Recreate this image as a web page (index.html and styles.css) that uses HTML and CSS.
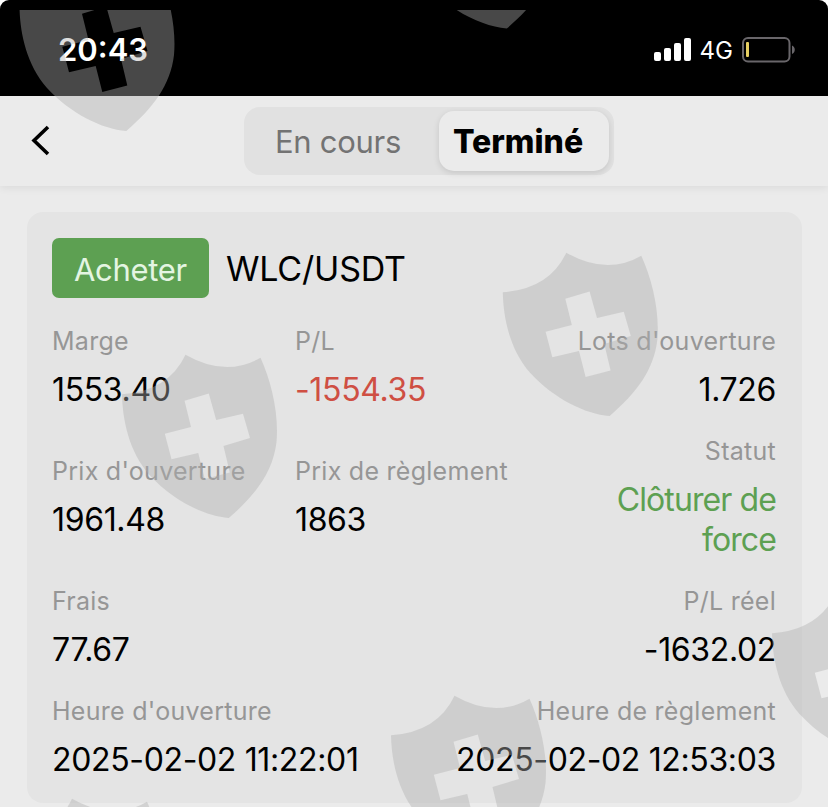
FILE: index.html
```html
<!DOCTYPE html>
<html lang="fr">
<head>
    <meta charset="UTF-8">
    <meta name="viewport" content="width=device-width, initial-scale=1.0">
    <title>WLC/USDT</title>
    <link rel="stylesheet" href="styles.css">
</head>
<body>
    <div class="screen">
        <div class="status-bar">
            <span class="time">20:43</span>
            <div class="status-icons">
                <svg class="signal" width="38" height="24" viewBox="0 0 38 24" fill="#fff">
                    <rect x="0" y="14" width="7" height="9" rx="2"/>
                    <rect x="10" y="10" width="7" height="13" rx="2"/>
                    <rect x="20" y="5" width="7" height="18" rx="2"/>
                    <rect x="30" y="0" width="7" height="23" rx="2"/>
                </svg>
                <span class="network">4G</span>
                <svg class="battery" width="54" height="26" viewBox="0 0 54 26">
                    <rect x="1" y="1" width="46.5" height="23.5" rx="5" fill="none" stroke="#69666a" stroke-width="2"/>
                    <rect x="4" y="5" width="3" height="15" rx="1" fill="#e6cf62"/>
                    <path d="M50 8.5c3.7 1.4 3.7 7 0 8.5z" fill="#69666a"/>
                </svg>
            </div>
        </div>

        <div class="nav">
            <svg class="back" width="20" height="32" viewBox="0 0 20 32" fill="none" stroke="#000" stroke-width="3.6">
                <path d="M18 2L4 15.500L18 29"/>
            </svg>
            <div class="tabs">
                <div class="tab">En cours</div>
                <div class="tab active">Terminé</div>
            </div>
        </div>

        <div class="card">
            <div class="card-header">
                <span class="side">Acheter</span>
                <span class="pair">WLC/USDT</span>
            </div>
            <div class="row">
                <div class="item">
                    <div class="label">Marge</div>
                    <div class="value">1553.40</div>
                </div>
                <div class="item">
                    <div class="label">P/L</div>
                    <div class="value red">-1554.35</div>
                </div>
                <div class="item right">
                    <div class="label">Lots d'ouverture</div>
                    <div class="value">1.726</div>
                </div>
            </div>
            <div class="row">
                <div class="item">
                    <div class="label">Prix d'ouverture</div>
                    <div class="value">1961.48</div>
                </div>
                <div class="item">
                    <div class="label">Prix de règlement</div>
                    <div class="value">1863</div>
                </div>
                <div class="item right">
                    <div class="label">Statut</div>
                    <div class="value green">Clôturer de<br>force</div>
                </div>
            </div>
            <div class="row two">
                <div class="item">
                    <div class="label">Frais</div>
                    <div class="value">77.67</div>
                </div>
                <div class="item right">
                    <div class="label">P/L réel</div>
                    <div class="value">-1632.02</div>
                </div>
            </div>
            <div class="row two">
                <div class="item">
                    <div class="label">Heure d'ouverture</div>
                    <div class="value">2025-02-02 11:22:01</div>
                </div>
                <div class="item right">
                    <div class="label">Heure de règlement</div>
                    <div class="value">2025-02-02 12:53:03</div>
                </div>
            </div>
        </div>

        <!-- shield watermark over the whole screen -->
        <svg class="watermark" width="828" height="797" viewBox="0 10 828 797">
            <defs>
                <path id="shield" fill-rule="evenodd" d="M.5 40.3Q47 37 64 .7Q104.500 23.800 139 3.700C150 28 157.500 60 155 88C151.500 118 134 141 107.300 164C83 162 52 147 28 121C7 97 1 65 .5 40.300ZM63 46.700L87.300 39.500L94.700 66L121.500 59.700L128.500 84L102 92L108.300 118.500L83.300 125L76.700 99L50 105.300L43.300 79.700L69.500 73Z"/>
            </defs>
            <g fill="#afafaf" fill-opacity="0.41">
                <use href="#shield" x="19" y="-33"/>
                <use href="#shield" x="399.500" y="-135.500"/>
                <use href="#shield" x="502.300" y="252"/>
                <use href="#shield" x="121.500" y="354"/>
                <use href="#shield" x="390.500" y="695"/>
                <use href="#shield" x="771.500" y="593"/>
                <use href="#shield" x="8" y="798"/>
            </g>
        </svg>
    </div>
</body>
</html>
```
FILE: styles.css
```css
body {
    margin: 0;
    background-color: #fff;
    font-family: Inter, "Liberation Sans", sans-serif;
    color: #000;
}
.screen {
    position: relative;
    height: 807px;
    overflow: hidden;
    background-color: #ebebeb;
    border-radius: 9px 9px 0 0;
}
.status-bar {
    height: 96px;
    box-sizing: border-box;
    padding: 7px 32px 4px 58px;
    display: flex;
    justify-content: space-between;
    align-items: center;
    background-color: #000;
    color: #fff;
}
.time {
    font-size: 31px;
    font-weight: 600;
    letter-spacing: 0;
}
.status-icons {
    display: flex;
    align-items: center;
}
.network {
    margin: 2px 9px 0 8px;
    font-size: 24px;
    font-weight: 400;
}
.nav {
    position: relative;
    height: 90px;
    box-sizing: border-box;
    padding: 11px 214px 11px 30px;
    display: flex;
    justify-content: space-between;
    align-items: center;
    background-color: #ebebeb;
    box-shadow: 0 2px 8px rgba(0, 0, 0, 0.07);
}
.tabs {
    display: flex;
    width: 370px;
    height: 68px;
    box-sizing: border-box;
    padding: 4px 5px 4px 0;
    border-radius: 16px;
    background-color: #e1e1e1;
}
.tab {
    width: 195px;
    line-height: 62px;
    text-align: center;
    font-size: 31px;
    letter-spacing: -0.3px;
    text-indent: -7px;
    color: #737373;
    white-space: nowrap;
}
.tab.active {
    width: 170px;
    height: 60px;
    border-radius: 15px;
    background-color: #ebebeb;
    box-shadow: 0 2px 6px rgba(0, 0, 0, 0.12);
    color: #000;
    font-size: 32px;
    font-weight: 800;
    letter-spacing: 0;
    text-indent: -12px;
}
.card {
    margin: 26px 26px 0 27px;
    padding: 26px 26px 24px 25px;
    border-radius: 16px;
    background-color: #e4e4e4;
}
.card-header {
    display: flex;
    align-items: center;
    height: 60px;
    margin-bottom: 27px;
}
.side {
    width: 157px;
    line-height: 63px;
    height: 60px;
    margin-right: 17px;
    border-radius: 7px;
    background-color: #5da052;
    color: #e4f5e2;
    font-size: 31px;
    letter-spacing: -0.3px;
    text-align: center;
}
.pair {
    font-size: 34px;
    letter-spacing: -0.2px;
}
.row {
    display: grid;
    grid-template-columns: 243px 243px 1fr;
    align-items: center;
}
.row.two {
    grid-template-columns: 1fr 1fr;
}
.row + .row {
    margin-top: 26px;
}
.right {
    text-align: right;
}
.label {
    margin-bottom: 13px;
    line-height: 32px;
    font-size: 25px;
    letter-spacing: 0.27px;
    color: #969696;
    white-space: nowrap;
}
.value {
    margin-bottom: -1px;
    line-height: 40px;
    font-size: 32px;
    letter-spacing: -0.35px;
    white-space: nowrap;
}
.red {
    color: #cf4f43;
}
.green {
    color: #5da052;
    letter-spacing: -0.9px;
}
.watermark {
    position: absolute;
    left: 0;
    top: 10px;
    pointer-events: none;
}
```
